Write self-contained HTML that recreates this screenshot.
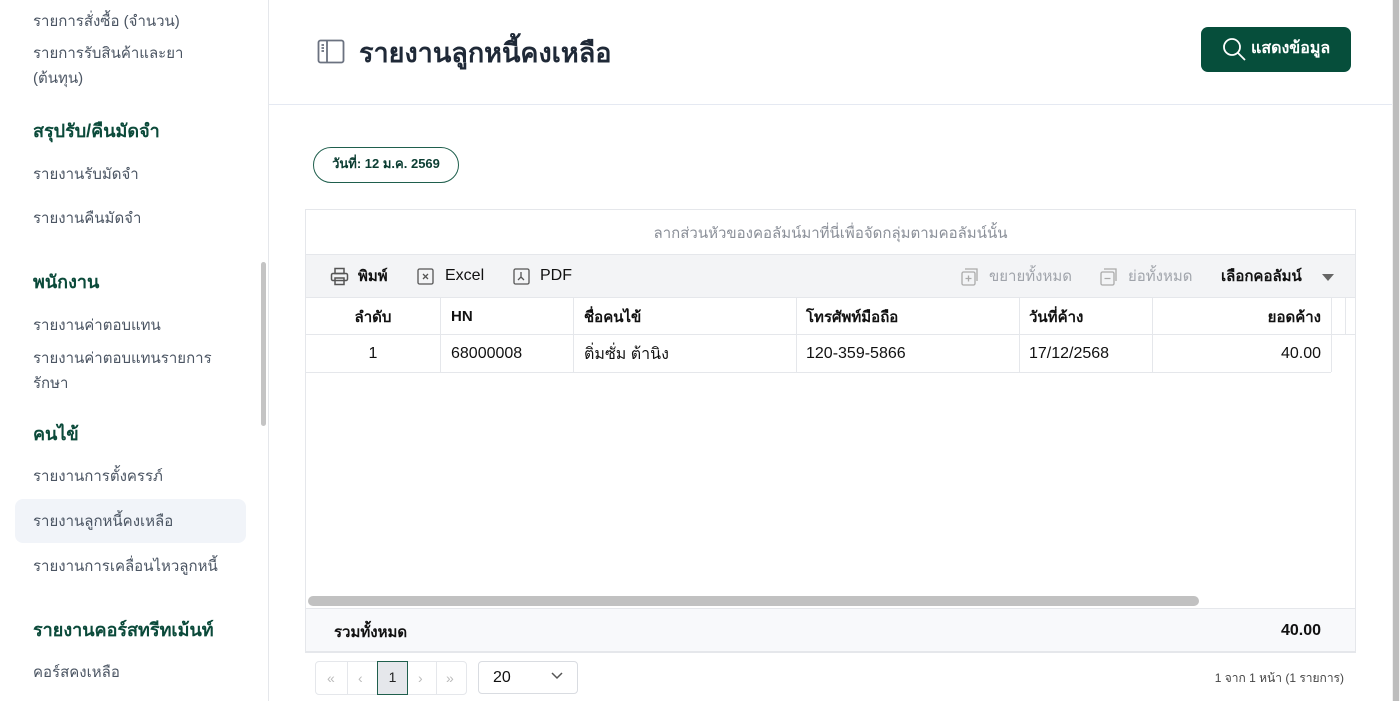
<!DOCTYPE html>
<html><head><meta charset="utf-8"><style>
*{box-sizing:border-box;margin:0;padding:0}
body{width:1400px;height:701px;overflow:hidden;background:#fff;font-family:"Liberation Sans","Noto Sans CJK SC",sans-serif;color:#111;position:relative}
.a{position:absolute}
.side{left:0;top:0;width:269px;height:701px;border-right:1px solid #e5e7eb;background:#fff}
.si{position:absolute;left:33px;font-size:15px;color:#4b5563;line-height:25px}
.sh{position:absolute;left:33px;font-size:18px;font-weight:bold;color:#0b4a3a}
.th{font-weight:bold;font-size:15px}
.col{position:absolute;top:0;height:100%;border-left:1px solid #e5e7eb}
</style></head><body>
<div class="a side">
<div class="si" style="top:9px">รายการสั่งซื้อ (จำนวน)</div>
<div class="si" style="top:41px">รายการรับสินค้าและยา<br>(ต้นทุน)</div>
<div class="sh" style="top:116px">สรุปรับ/คืนมัดจำ</div>
<div class="si" style="top:162px">รายงานรับมัดจำ</div>
<div class="si" style="top:206px">รายงานคืนมัดจำ</div>
<div class="sh" style="top:267px">พนักงาน</div>
<div class="si" style="top:313px">รายงานค่าตอบแทน</div>
<div class="si" style="top:346px">รายงานค่าตอบแทนรายการ<br>รักษา</div>
<div class="sh" style="top:419px">คนไข้</div>
<div class="si" style="top:464px">รายงานการตั้งครรภ์</div>
<div class="a" style="left:15px;top:499px;width:231px;height:44px;background:#f1f4f9;border-radius:8px"></div>
<div class="si" style="top:509px">รายงานลูกหนี้คงเหลือ</div>
<div class="si" style="top:554px">รายงานการเคลื่อนไหวลูกหนี้</div>
<div class="sh" style="top:615px">รายงานคอร์สทรีทเม้นท์</div>
<div class="si" style="top:660px">คอร์สคงเหลือ</div>
<div class="a" style="left:261px;top:262px;width:5px;height:164px;background:#c4c4c4;border-radius:3px"></div>
</div>
<div class="a" style="left:1392px;top:0;width:8px;height:701px;background:#f0f0f0"><div style="margin-left:1px;width:6px;height:701px;background:#bdbdbd"></div></div>
<div class="a" style="left:269px;top:104px;width:1123px;height:1px;background:#e5e9f2"></div>
<svg class="a" style="left:317px;top:39px" width="28" height="26" viewBox="0 0 28 26" fill="none" stroke="#6b7280" stroke-width="1.8"><rect x="1.5" y="1.5" width="25" height="22" rx="2"/><line x1="10" y1="1.5" x2="10" y2="23.5"/><line x1="4.5" y1="6" x2="7" y2="6"/><line x1="4.5" y1="9" x2="7" y2="9"/><line x1="4.5" y1="12" x2="7" y2="12"/></svg>
<div class="a" style="left:359px;top:31px;font-size:27px;font-weight:bold;color:#1f2937">รายงานลูกหนี้คงเหลือ</div>
<div class="a" style="left:1201px;top:27px;width:150px;height:45px;background:#064e3b;border-radius:7px;color:#fff;font-weight:bold;font-size:16px;line-height:43px;padding-left:50px">แสดงข้อมูล</div>
<svg class="a" style="left:1222px;top:37px" width="26" height="26" viewBox="0 0 26 26" fill="none" stroke="#fff" stroke-width="1.8"><circle cx="10" cy="10" r="8"/><line x1="16" y1="16" x2="23" y2="23"/></svg>
<div class="a" style="left:313px;top:147px;width:146px;height:36px;border:1.5px solid #1f5f4d;border-radius:18px;text-align:center;line-height:31px;font-size:13px;font-weight:bold;color:#0b3d32">วันที่: 12 ม.ค. 2569</div>
<div class="a" style="left:305px;top:209px;width:1051px;height:444px;border:1px solid #e5e7eb"></div>
<div class="a" style="left:306px;top:221px;width:1049px;text-align:center;font-size:15px;color:#8a8f98">ลากส่วนหัวของคอลัมน์มาที่นี่เพื่อจัดกลุ่มตามคอลัมน์นั้น</div>
<div class="a" style="left:306px;top:254px;width:1049px;height:43px;background:#f3f4f6;border-top:1px solid #e5e7eb;font-size:16px">
<svg class="a" style="left:24px;top:12px" width="19" height="19" viewBox="0 0 19 19" fill="none" stroke="#555" stroke-width="1.5"><rect x="5" y="1.5" width="9" height="5"/><rect x="1.5" y="6.5" width="16" height="7" rx="1.5"/><rect x="5" y="11" width="9" height="6.5"/></svg>
<div class="a" style="left:52px;top:9px;font-weight:bold;font-size:15px">พิมพ์</div>
<svg class="a" style="left:111px;top:13px" width="17" height="17" viewBox="0 0 17 17" fill="none" stroke="#555" stroke-width="1.3"><rect x="1" y="1" width="15" height="15" rx="1.5"/><path d="M6 6l5 5M11 6l-5 5"/></svg>
<div class="a" style="left:139px;top:12px">Excel</div>
<svg class="a" style="left:207px;top:13px" width="17" height="17" viewBox="0 0 17 17" fill="none" stroke="#555" stroke-width="1.3"><rect x="1" y="1" width="15" height="15" rx="1.5"/><path d="M8 4v5l-3 3M8 9l3 3"/></svg>
<div class="a" style="left:234px;top:12px">PDF</div>
<svg class="a" style="left:655px;top:13px" width="18" height="18" viewBox="0 0 18 18" fill="none" stroke="#aaa" stroke-width="1.3"><rect x="1" y="4" width="13" height="13" rx="1.5"/><path d="M4 1h12v12M7.5 7.5v6M4.5 10.5h6"/></svg>
<div class="a" style="left:683px;top:9px;color:#a0a4ab;font-size:15px">ขยายทั้งหมด</div>
<svg class="a" style="left:794px;top:13px" width="18" height="18" viewBox="0 0 18 18" fill="none" stroke="#aaa" stroke-width="1.3"><rect x="1" y="4" width="13" height="13" rx="1.5"/><path d="M4 1h12v12M4.5 10.5h6"/></svg>
<div class="a" style="left:822px;top:9px;color:#a0a4ab;font-size:15px">ย่อทั้งหมด</div>
<div class="a" style="left:915px;top:9px;font-weight:bold;font-size:15px">เลือกคอลัมน์</div>
<div class="a" style="left:1016px;top:19px;width:0;height:0;border-left:6px solid transparent;border-right:6px solid transparent;border-top:7px solid #666"></div>
</div>
<div class="a" style="left:306px;top:297px;width:1049px;height:38px;border-top:1px solid #e5e7eb;border-bottom:1px solid #e5e7eb">
<div class="col" style="left:134px"></div><div class="col" style="left:267px"></div><div class="col" style="left:490px"></div><div class="col" style="left:713px"></div><div class="col" style="left:846px"></div><div class="col" style="left:1025px"></div><div class="col" style="left:1039px"></div>
<div class="a th" style="left:0;width:134px;text-align:center;top:7px">ลำดับ</div>
<div class="a th" style="left:145px;top:10px">HN</div>
<div class="a th" style="left:278px;top:7px">ชื่อคนไข้</div>
<div class="a th" style="left:500px;top:7px">โทรศัพท์มือถือ</div>
<div class="a th" style="left:723px;top:7px">วันที่ค้าง</div>
<div class="a th" style="left:846px;width:169px;text-align:right;top:7px">ยอดค้าง</div>
</div>
<div class="a" style="left:306px;top:335px;width:1025px;height:38px;border-bottom:1px solid #e5e7eb;font-size:16px">
<div class="col" style="left:134px"></div><div class="col" style="left:267px"></div><div class="col" style="left:490px"></div><div class="col" style="left:713px"></div><div class="col" style="left:846px"></div><div class="col" style="left:1025px"></div>
<div class="a" style="left:0;width:134px;text-align:center;top:10px">1</div>
<div class="a" style="left:145px;top:10px">68000008</div>
<div class="a" style="left:278px;top:7px">ติ่มซั่ม ต้านิง</div>
<div class="a" style="left:500px;top:10px">120-359-5866</div>
<div class="a" style="left:723px;top:10px">17/12/2568</div>
<div class="a" style="left:846px;width:169px;text-align:right;top:10px">40.00</div>
</div>
<div class="a" style="left:308px;top:596px;width:891px;height:10px;background:#c1c1c1;border-radius:5px"></div>
<div class="a" style="left:306px;top:608px;width:1049px;height:44px;background:#f8f9fb;border-top:1px solid #e5e7eb;border-bottom:1px solid #e5e7eb">
<div class="a th" style="left:28px;top:11px">รวมทั้งหมด</div>
<div class="a th" style="right:34px;top:13px;font-size:16px">40.00</div>
</div>
<div class="a" style="left:315px;top:661px;width:152px;height:34px;border:1px solid #e5e7eb;border-radius:4px;color:#bbb;font-size:14px">
<span class="a" style="left:11px;top:8px">«</span><span class="a" style="left:31px;top:0;height:32px;border-left:1px solid #e5e7eb"></span>
<span class="a" style="left:42px;top:8px">‹</span>
<span class="a" style="left:61px;top:-1px;width:31px;height:34px;background:#e5e7eb;border:1.5px solid #1f5f4d;color:#222;text-align:center;line-height:30px">1</span>
<span class="a" style="left:102px;top:8px">›</span><span class="a" style="left:120px;top:0;height:32px;border-left:1px solid #e5e7eb"></span>
<span class="a" style="left:130px;top:8px">»</span>
</div>
<div class="a" style="left:478px;top:661px;width:100px;height:33px;border:1px solid #d9dce1;border-radius:4px;font-size:16px;padding:7px 0 0 14px">20</div>
<svg class="a" style="left:551px;top:672px" width="12" height="8" viewBox="0 0 12 8" fill="none" stroke="#555" stroke-width="1.5"><path d="M1 1l5 5 5-5"/></svg>
<div class="a" style="right:56px;top:669px;font-size:12px;color:#444">1 จาก 1 หน้า (1 รายการ)</div>
</body></html>
